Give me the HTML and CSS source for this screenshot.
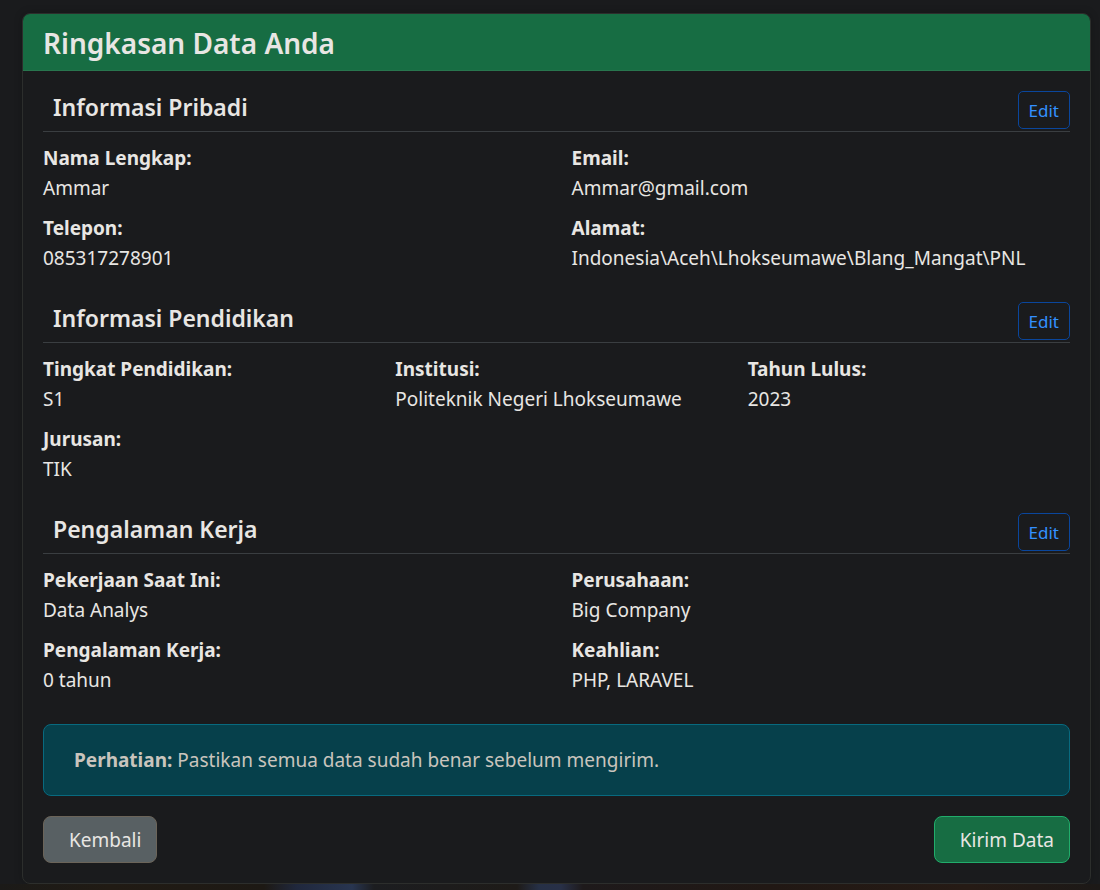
FILE: index.html
```html
<!DOCTYPE html>
<html lang="id">
<head>
<meta charset="utf-8">
<title>Ringkasan Data Anda</title>
<link rel="stylesheet" href="styles.css">
</head>
<body>
<main class="card">
  <header class="card-header"><h1>Ringkasan Data Anda</h1></header>
  <div class="card-body">
    <section class="section">
      <div class="section-head"><h2>Informasi Pribadi</h2><button type="button" class="btn-edit">Edit</button></div>
      <dl class="grid two">
        <div><dt>Nama Lengkap:</dt><dd>Ammar</dd></div>
        <div><dt>Email:</dt><dd>Ammar@gmail.com</dd></div>
        <div><dt>Telepon:</dt><dd>085317278901</dd></div>
        <div><dt>Alamat:</dt><dd>Indonesia\Aceh\Lhokseumawe\Blang_Mangat\PNL</dd></div>
      </dl>
    </section>
    <section class="section">
      <div class="section-head"><h2>Informasi Pendidikan</h2><button type="button" class="btn-edit">Edit</button></div>
      <dl class="grid three">
        <div><dt>Tingkat Pendidikan:</dt><dd>S1</dd></div>
        <div><dt>Institusi:</dt><dd>Politeknik Negeri Lhokseumawe</dd></div>
        <div><dt>Tahun Lulus:</dt><dd>2023</dd></div>
        <div><dt>Jurusan:</dt><dd>TIK</dd></div>
      </dl>
    </section>
    <section class="section">
      <div class="section-head"><h2>Pengalaman Kerja</h2><button type="button" class="btn-edit">Edit</button></div>
      <dl class="grid two">
        <div><dt>Pekerjaan Saat Ini:</dt><dd>Data Analys</dd></div>
        <div><dt>Perusahaan:</dt><dd>Big Company</dd></div>
        <div><dt>Pengalaman Kerja:</dt><dd>0 tahun</dd></div>
        <div><dt>Keahlian:</dt><dd>PHP, LARAVEL</dd></div>
      </dl>
    </section>
    <p class="alert"><strong>Perhatian:</strong> Pastikan semua data sudah benar sebelum mengirim.</p>
    <div class="actions">
      <button type="button" class="btn btn-back">Kembali</button>
      <button type="submit" class="btn btn-send">Kirim Data</button>
    </div>
  </div>
</main>
<div class="backdrop"></div>
</body>
</html>
```
FILE: styles.css
```css
* { box-sizing: border-box; }
body {
  display: flex;
  flex-direction: column;
  min-height: 100vh;
  margin: 0;
  background: #1a1b1d;
  color: #e8e6e3;
  font: 19px/30px "Segoe UI", "Noto Sans", "Open Sans", sans-serif;
}
h1, h2, dl, dd, p { margin: 0; }
button { font-family: inherit; cursor: pointer; }
.card {
  margin: 13px 9px 0 22px;
  background: #1a1b1d;
  border: 1px solid #2c2e2c;
  border-radius: 8px;
  box-shadow: 0 0 8px rgba(0, 0, 0, 0.2);
  overflow: hidden;
}
.card-header {
  padding: 12px 20px 10px;
  background: #176d43;
  border-bottom: 1px solid #28754e;
}
.card-header h1 { font-size: 28px; line-height: 34px; font-weight: 600; }
.card-body { padding: 20px; }
.section { margin-bottom: 29px; }
.section-head {
  display: flex;
  justify-content: space-between;
  align-items: flex-start;
  margin-bottom: 11px;
  padding-bottom: 2px;
  border-bottom: 1px solid #3a3e41;
}
.section-head h2 { padding-left: 10px; font-size: 23px; line-height: 32px; font-weight: 600; }
.btn-edit {
  height: 38px;
  padding: 0 10px;
  background: transparent;
  border: 1px solid #0a469c;
  border-radius: 5px;
  color: #3391ff;
  font-size: 17px;
}
.grid { display: grid; row-gap: 10px; column-gap: 30px; }
.two { grid-template-columns: repeat(2, 1fr); }
.three { grid-template-columns: repeat(3, 1fr); }
dt, strong { font-weight: 700; }
.alert {
  padding: 20px 30px;
  background: #06404b;
  border: 1px solid #086a7f;
  border-radius: 8px;
  color: #c9c4bd;
}
.actions { display: flex; justify-content: space-between; margin-top: 20px; }
.btn {
  height: 47px;
  padding: 0 15px 0 25px;
  border: 1px solid;
  border-radius: 8px;
  color: #e8e6e3;
  font-size: 19px;
}
.btn-back { background: #586063; border-color: #6b6459; }
.btn-send { background: #176d43; border-color: #21ad6b; }
.backdrop {
  flex: 1;
  min-height: 6px;
  background: linear-gradient(90deg, #1b1a18 0, #211b14 10%, #1d1914 24%, #20283d 27%, #283550 32%, #1c1d20 34%, #1e1b18 47%, #263046 49%, #283047 51%, #1e1a1b 53%, #211814 70%, #261b15 88%, #1c1917 100%);
}
```
